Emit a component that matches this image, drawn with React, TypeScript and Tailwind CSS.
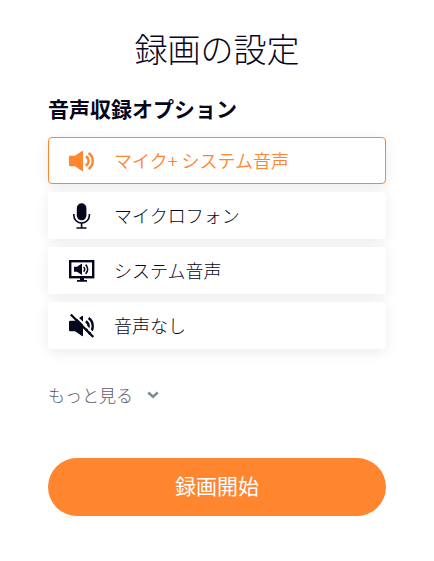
import { useState } from 'react';
import type { ReactNode } from 'react';

type AudioMode = 'both' | 'microphone' | 'system' | 'none';

function SpeakerIcon() {
  return (
    <svg width="26" height="26" viewBox="0 0 26 26" fill="none" aria-hidden="true">
      <path d="M1.2 7.8H6L13 3q1-.5 1 .6v18.8q0 1.100-1 .6L6 18.200H1.200Q0 18.200 0 17V9Q0 7.800 1.200 7.800z" fill="currentColor" />
      <path d="M16.800 8.400a5.200 5.200 0 0 1 0 9.200" stroke="currentColor" strokeWidth="2.400" />
      <path d="M19.600 5a9.800 9.800 0 0 1 0 16" stroke="currentColor" strokeWidth="2.400" />
    </svg>
  );
}

function MicrophoneIcon() {
  return (
    <svg width="26" height="26" viewBox="0 0 26 26" fill="none" aria-hidden="true">
      <rect x="7.8" y=".3" width="9.6" height="17" rx="4.8" fill="currentColor" />
      <path d="M4.8 11v1.200a7.800 7.800 0 0 0 15.600 0V11" stroke="currentColor" strokeWidth="1.600" />
      <path d="M12.600 20v5M7.500 25h10" stroke="currentColor" strokeWidth="1.600" />
    </svg>
  );
}

function MonitorIcon() {
  return (
    <svg width="26" height="26" viewBox="0 0 26 26" fill="none" aria-hidden="true">
      <rect x="1.2" y="3.2" width="23" height="16" stroke="currentColor" strokeWidth="2.4" />
      <path d="M11 19h4v3h3v1.8H8V22h3z" fill="currentColor" />
      <path d="M5 8.800h3L13 5.500v11.500l-5-3.300H5z" fill="currentColor" />
      <path d="M14.600 9a3 3 0 0 1 0 4.600M16.600 6.700a6.200 6.200 0 0 1 0 9.200" stroke="currentColor" strokeWidth="1.600" />
    </svg>
  );
}

function MutedIcon() {
  return (
    <svg width="26" height="26" viewBox="0 0 26 26" fill="none" aria-hidden="true">
      <path d="M1.2 7.8H6L13 3q1-.5 1 .6v18.8q0 1.100-1 .6L6 18.200H1.200Q0 18.200 0 17V9Q0 7.800 1.200 7.800z" fill="currentColor" />
      <path d="M16.800 8.400a5.200 5.200 0 0 1 0 9.200" stroke="currentColor" strokeWidth="2.400" />
      <path d="M19.600 5a9.800 9.800 0 0 1 0 16" stroke="currentColor" strokeWidth="2.400" />
      <path d="M3.800 0l22 22" stroke="white" strokeWidth="2" />
      <path d="M1.800 1.500L24.300 24" stroke="currentColor" strokeWidth="2.400" />
    </svg>
  );
}

const OPTIONS: { id: AudioMode; label: string; icon: ReactNode }[] = [
  { id: 'both', label: 'マイク+ システム音声', icon: <SpeakerIcon /> },
  { id: 'microphone', label: 'マイクロフォン', icon: <MicrophoneIcon /> },
  { id: 'system', label: 'システム音声', icon: <MonitorIcon /> },
  { id: 'none', label: '音声なし', icon: <MutedIcon /> },
];

export default function App() {
  const [mode, setMode] = useState<AudioMode>('both');

  return (
    <main className="bg-white px-12 pt-6 pb-11 font-['Noto_Sans_CJK_JP',sans-serif] font-light text-[#06061c]">
      <h1 className="text-center text-[33px] leading-12">録画の設定</h1>

      <fieldset className="mt-5">
        <legend className="text-[21px] leading-8 font-bold">音声収録オプション</legend>
        <div className="mt-[13px] flex flex-col gap-2">
          {OPTIONS.map((option) => (
            <label
              key={option.id}
              className="flex h-[47px] cursor-pointer items-center gap-[19px] rounded border border-transparent bg-white px-5 text-lg shadow-[0_3px_14px_rgba(0,0,0,0.08)] has-checked:border-[#ff852e] has-checked:font-[350] has-checked:text-[#ff852e]"
            >
              <input
                type="radio"
                name="audio"
                value={option.id}
                checked={mode === option.id}
                onChange={() => setMode(option.id)}
                className="sr-only"
              />
              {option.icon}
              <span className="pb-0.5">{option.label}</span>
            </label>
          ))}
        </div>
      </fieldset>

      <button type="button" className="mt-8 flex items-center gap-3.5 text-[17px] leading-7 text-[#5d5b6d]">
        もっと見る
        <svg width="12" height="8" viewBox="0 0 12 8" fill="none" aria-hidden="true">
          <path d="M1.2 1.5L6 5.8l4.8-4.3" stroke="#7f8c91" strokeWidth="2.6" />
        </svg>
      </button>

      <button type="button" className="mt-[49px] h-[58px] w-full rounded-full bg-[#ff852e] pb-0.5 text-[21px] font-normal text-white">
        録画開始
      </button>
    </main>
  );
}
